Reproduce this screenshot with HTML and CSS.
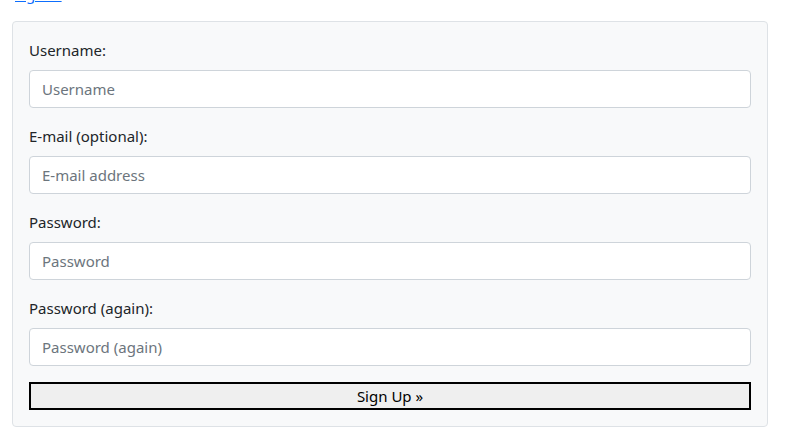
FILE: index.html
```html
<!DOCTYPE html>
<html>
<head>
<meta charset="utf-8">
<link rel="stylesheet" href="styles.css">
</head>
<body>
<div class="page">
  <p class="signin"><a href="#">sign in</a></p>
  <form class="card">
    <div class="field">
      <label class="label">Username:</label>
      <input class="input" type="text" placeholder="Username">
    </div>
    <div class="field">
      <label class="label">E-mail (optional):</label>
      <input class="input" type="text" placeholder="E-mail address">
    </div>
    <div class="field">
      <label class="label">Password:</label>
      <input class="input" type="password" placeholder="Password">
    </div>
    <div class="field">
      <label class="label">Password (again):</label>
      <input class="input" type="password" placeholder="Password (again)">
    </div>
    <button class="submit" type="button">Sign Up &raquo;</button>
  </form>
</div>
</body>
</html>
```

FILE: styles.css
```css
html, body {
  margin: 0;
  padding: 0;
  background: #fff;
}
body {
  font-family: "Noto Sans", "Open Sans", sans-serif;
  font-size: 15px;
  color: #212529;
}
.page {
  width: 756px;
  margin-left: 12px;
  padding-top: 1px;
}
.signin {
  margin: -17px 0 16px 3px;
  height: 21px;
  line-height: 21px;
  font-size: 15px;
}
.signin a {
  color: #0d6efd;
  text-decoration: underline;
}
.card {
  display: block;
  box-sizing: border-box;
  margin: 0;
  background: #f8f9fa;
  border: 1px solid #dee2e6;
  border-radius: 4px;
  padding: 16px;
}
.field {
  display: flex;
  flex-direction: column;
  margin-bottom: 16px;
}
.label {
  display: block;
  height: 24px;
  line-height: 24px;
  margin-bottom: 8px;
}
.input {
  box-sizing: border-box;
  width: 100%;
  height: 38px;
  margin: 0;
  padding: 6px 12px;
  font-family: inherit;
  font-size: 15px;
  color: #212529;
  background: #fff;
  border: 1px solid #ced4da;
  border-radius: 4px;
  outline: none;
}
.input::placeholder {
  color: #6c757d;
  opacity: 1;
}
.submit {
  display: block;
  box-sizing: border-box;
  width: 100%;
  height: 28px;
  margin: 0;
  padding: 0;
  font-family: inherit;
  font-size: 15px;
  color: #000;
  background: #efefef;
  border: 2px solid #000;
  border-radius: 0;
}
```
